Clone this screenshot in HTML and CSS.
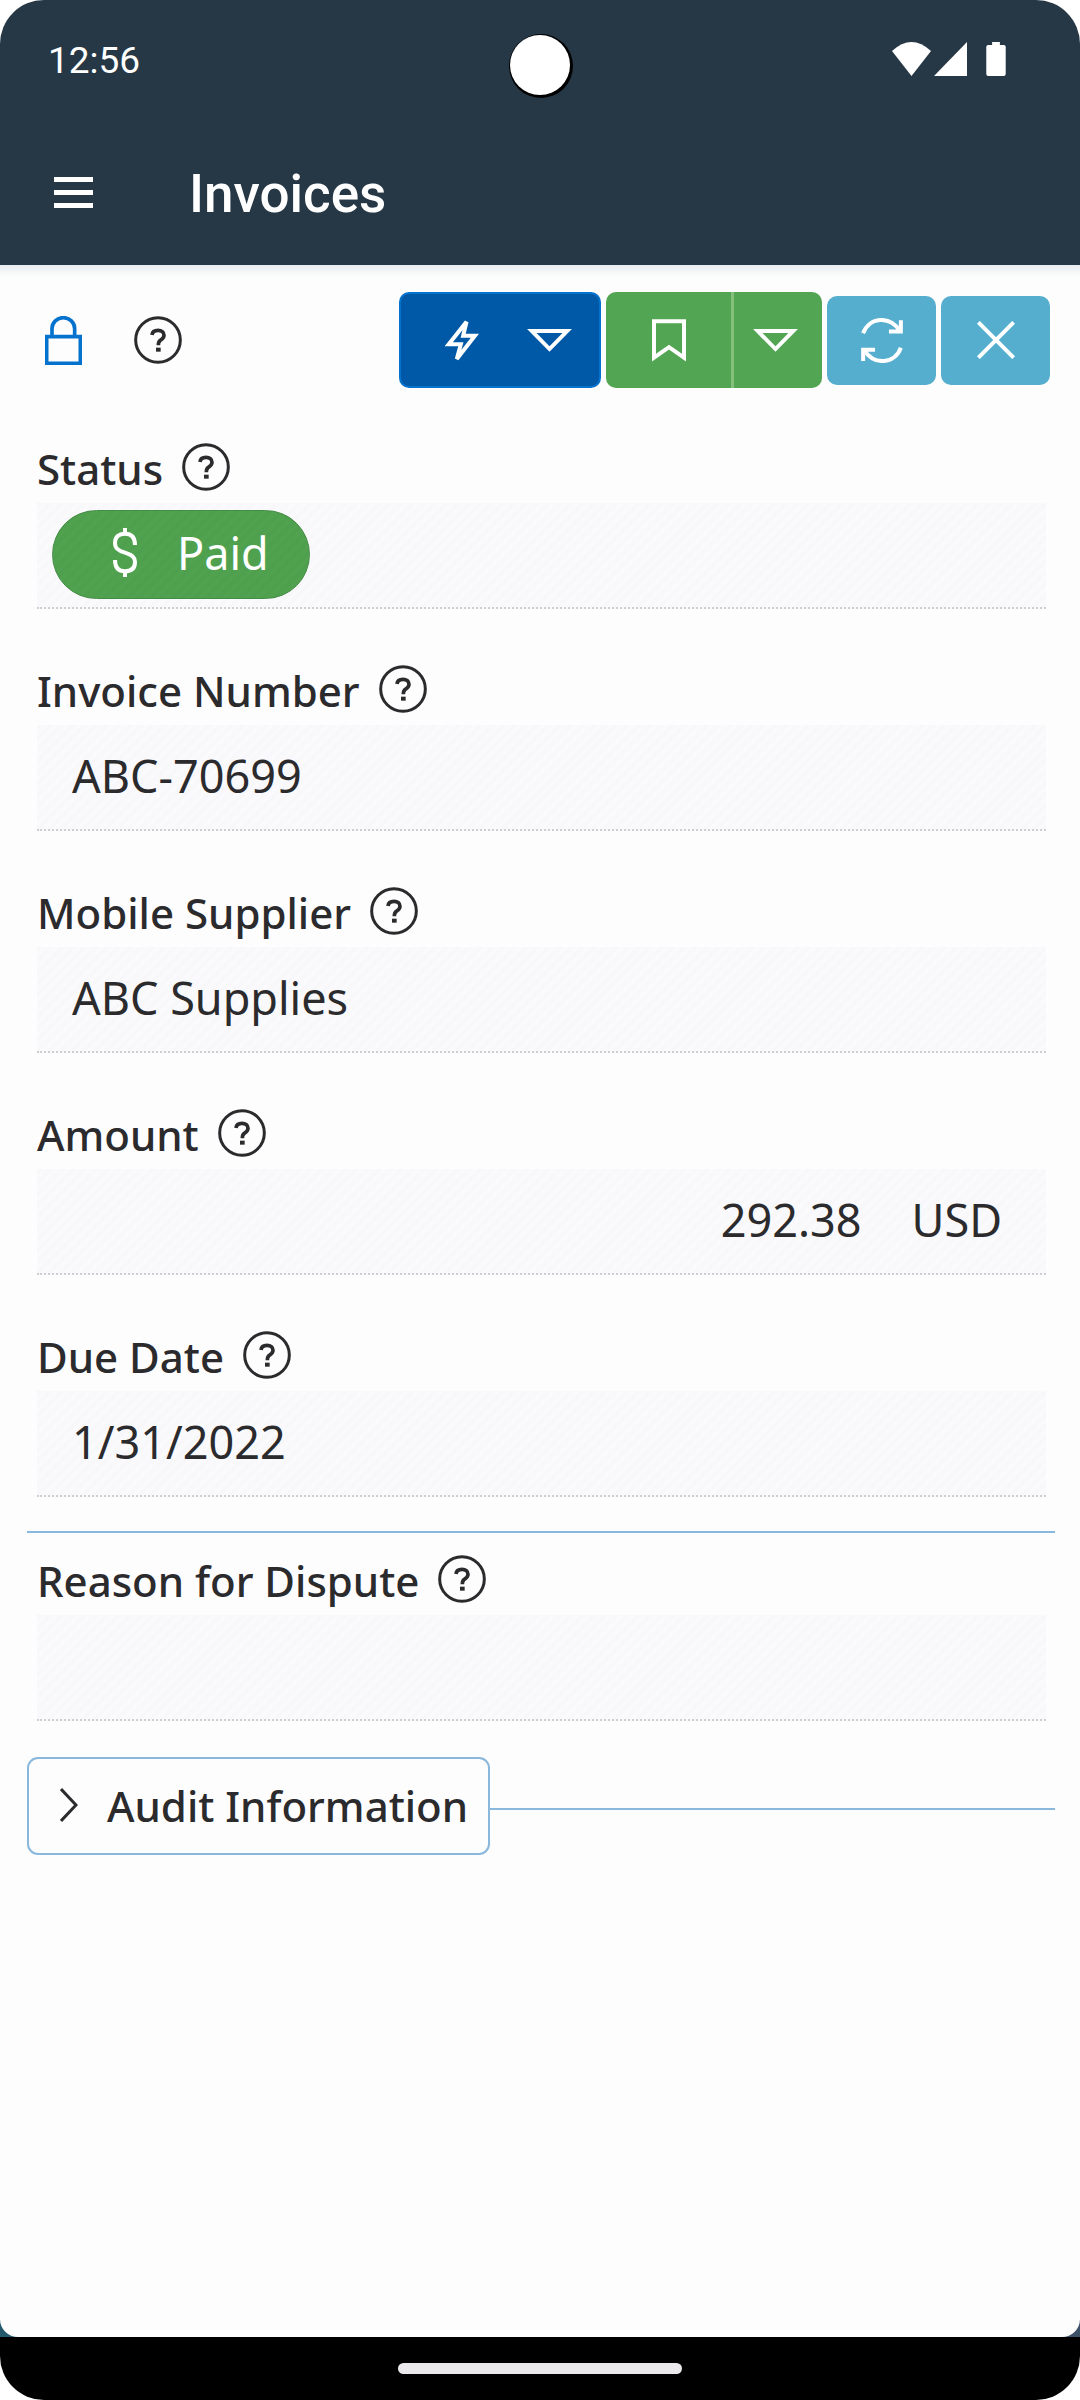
FILE: index.html
```html
<!DOCTYPE html>
<html lang="en">
<head>
  <meta charset="UTF-8">
  <meta name="viewport" content="width=device-width, initial-scale=1">
  <title>Invoices</title>
  <link rel="stylesheet" href="styles.css">
</head>
<body>
  <!-- shared icons -->
  <svg class="sprite" aria-hidden="true">
    <symbol id="icon-help" viewBox="0 0 144 144">
      <circle cx="72" cy="72" r="67" stroke-width="9"/>
      <path d="M54 57C55 47 62 43 72 43C83 43 90 49 90 58C90 67 84 70 79 73C74 76 73 79 73 88" stroke-width="11"/>
      <path d="M66 101H80" stroke-width="12"/>
    </symbol>
    <symbol id="icon-caret" viewBox="0 0 136 70">
      <path d="M14 6H122L68 61Z" stroke-width="12"/>
    </symbol>
  </svg>

  <div class="phone">
    <header class="header">
      <div class="status-bar">
        <span class="clock">12:56</span>
        <span class="camera"></span>
        <div class="indicators">
          <svg class="wifi" viewBox="0 0 39 34"><path d="M0 9Q19.500 -9 39 9L19.500 34Z"/></svg>
          <svg class="signal" viewBox="0 0 33 34"><path d="M33 0V34H0Z"/></svg>
          <svg class="battery" viewBox="0 0 20 35"><path d="M6 0H14V3H18Q20 3 20 5V33Q20 35 18 35H2Q0 35 0 33V5Q0 3 2 3H6Z"/></svg>
        </div>
      </div>
      <div class="app-bar">
        <button class="menu" type="button" aria-label="Menu"><span></span><span></span><span></span></button>
        <h1>Invoices</h1>
      </div>
    </header>

    <div class="backdrop">
      <main class="sheet">
        <div class="toolbar">
          <svg class="lock" viewBox="0 0 111 147">
            <path d="M5 62H106V142H5Z"/>
            <path d="M21 62V38A34 33 0 0 1 89 38V62"/>
          </svg>
          <button class="help" type="button" aria-label="Help"><svg><use href="#icon-help"/></svg></button>

          <div class="actions">
            <button class="btn btn-action" type="button" aria-label="Actions">
              <svg class="bolt" viewBox="0 0 104 158"><path d="M67 23L14 90H50L38 134L92 65H57Z"/></svg>
              <svg class="caret"><use href="#icon-caret"/></svg>
            </button>
            <div class="split">
              <button class="btn btn-save" type="button" aria-label="Save">
                <svg class="bookmark" viewBox="0 0 103 128"><path d="M6 6H97V116L51.500 84L6 116Z"/></svg>
              </button>
              <button class="btn btn-save-more" type="button" aria-label="More save options">
                <svg class="caret"><use href="#icon-caret"/></svg>
              </button>
            </div>
            <button class="btn btn-light" type="button" aria-label="Refresh">
              <svg class="refresh" viewBox="0 0 126 136">
                <path d="M6 46C24 -3 86 -9 117 39M120 7V41H84"/>
                <path d="M120 90C102 139 40 145 9 97M6 130V96H42"/>
              </svg>
            </button>
            <button class="btn btn-light" type="button" aria-label="Close">
              <svg class="close" viewBox="0 0 114 114"><path d="M4 4L110 110M110 4L4 110"/></svg>
            </button>
          </div>
        </div>

        <form class="fields">
          <div class="field">
            <div class="field-label">
              <span>Status</span>
              <button class="help" type="button" aria-label="Help for Status"><svg><use href="#icon-help"/></svg></button>
            </div>
            <div class="box box-status">
              <span class="pill">
                <svg class="dollar" viewBox="0 0 72 147">
                  <path d="M66 51C66 27 56 17 36 17C17 17 6 27 6 45C6 60 14 67 36 74C58 81 66 88 66 102C66 121 55 130 36 130C16 130 6 120 6 96"/>
                  <path d="M36 0V17M36 130V147"/>
                </svg>
                Paid
              </span>
            </div>
          </div>

          <div class="field">
            <div class="field-label">
              <label for="number">Invoice Number</label>
              <button class="help" type="button" aria-label="Help for Invoice Number"><svg><use href="#icon-help"/></svg></button>
            </div>
            <input class="box" id="number" type="text" value="ABC-70699" readonly>
          </div>

          <div class="field">
            <div class="field-label">
              <label for="supplier">Mobile Supplier</label>
              <button class="help" type="button" aria-label="Help for Mobile Supplier"><svg><use href="#icon-help"/></svg></button>
            </div>
            <input class="box" id="supplier" type="text" value="ABC Supplies" readonly>
          </div>

          <div class="field">
            <div class="field-label">
              <label for="amount">Amount</label>
              <button class="help" type="button" aria-label="Help for Amount"><svg><use href="#icon-help"/></svg></button>
            </div>
            <div class="box box-amount">
              <input id="amount" type="text" value="292.38" readonly>
              <span>USD</span>
            </div>
          </div>

          <div class="field">
            <div class="field-label">
              <label for="due">Due Date</label>
              <button class="help" type="button" aria-label="Help for Due Date"><svg><use href="#icon-help"/></svg></button>
            </div>
            <input class="box" id="due" type="text" value="1/31/2022" readonly>
          </div>

          <hr class="divider">

          <div class="field">
            <div class="field-label">
              <label for="reason">Reason for Dispute</label>
              <button class="help" type="button" aria-label="Help for Reason for Dispute"><svg><use href="#icon-help"/></svg></button>
            </div>
            <input class="box" id="reason" type="text" value="" readonly>
          </div>
        </form>

        <div class="audit">
          <button class="audit-toggle" type="button" aria-expanded="false">
            <svg class="chevron" viewBox="0 0 18 34"><path d="M1 1L16 17L1 33"/></svg>
            Audit Information
          </button>
        </div>
      </main>
    </div>

    <footer class="nav-bar"><span class="handle"></span></footer>
  </div>
</body>
</html>
```
FILE: styles.css
```css
:root {
  --header: #263746;
  --text: #2b2a2d;
  --blue: #0572ce;
  --blue-dark: #0059a6;
  --green: #52a552;
  --light-blue: #55aecd;
  --line: #8ab8dd;
}

* {
  box-sizing: border-box;
}

body {
  margin: 0;
  background: #fff;
  color: var(--text);
  font-family: "Noto Sans", sans-serif;
}

button,
input {
  margin: 0;
  padding: 0;
  border: none;
  background: none;
  color: inherit;
  font: inherit;
}

svg {
  display: block;
  fill: none;
  stroke: currentColor;
}

.sprite {
  position: absolute;
  width: 0;
  height: 0;
}

.phone {
  display: flex;
  flex-direction: column;
  min-height: 100vh;
  border-radius: 44px;
  overflow: hidden;
}

/* Header */
.header {
  background: var(--header);
  color: #fff;
  font-family: Roboto, sans-serif;
}

.status-bar {
  display: grid;
  grid-template-columns: 1fr auto 1fr;
  align-items: center;
  height: 120px;
  padding: 10px 74px 0 48px;
}

.clock {
  font-size: 37px;
  line-height: 44px;
  padding-bottom: 8px;
}

.camera {
  width: 60px;
  height: 60px;
  margin-left: 26px;
  border-radius: 50%;
  background: #fff;
  box-shadow: 1px 1px 0 2px #000;
}

.indicators {
  display: flex;
  justify-content: flex-end;
  gap: 3px;
  padding-bottom: 12px;
}

.indicators svg {
  height: 34px;
  fill: #fff;
  stroke: none;
}

.wifi {
  width: 39px;
}

.signal {
  width: 33px;
}

.battery {
  width: 20px;
  margin-left: 16px;
}

.app-bar {
  display: flex;
  align-items: center;
  gap: 96px;
  height: 145px;
  padding: 0 54px;
}

.menu {
  display: flex;
  flex-direction: column;
  gap: 8px;
  width: 39px;
}

.menu span {
  height: 5px;
  background: #fff;
}

h1 {
  margin: 0;
  padding-top: 2px;
  font-size: 53px;
  font-weight: 500;
  line-height: 64px;
}

/* Sheet */
.backdrop {
  display: flex;
  flex: 1;
  background: linear-gradient(to right, #24596b 50%, #3c5068 50%);
}

.sheet {
  flex: 1;
  border-radius: 0 0 18px 18px;
  background: linear-gradient(#e9edf1, #fdfdfd 12px);
}

.toolbar {
  display: flex;
  align-items: center;
  padding: 27px 30px 55px 45px;
}

.lock {
  width: 37px;
  height: 49px;
  margin-right: 52px;
  color: var(--blue);
  stroke-width: 11;
}

.help svg {
  width: 48px;
  height: 48px;
}

.actions {
  display: flex;
  align-items: center;
  gap: 5px;
  margin-left: auto;
  color: #fff;
}

.actions svg {
  stroke-width: 12;
}

.btn {
  display: flex;
  align-items: center;
  justify-content: center;
  height: 96px;
  border-radius: 10px;
}

.btn-action {
  gap: 48px;
  width: 202px;
  padding-left: 16px;
  border: 2px solid var(--blue);
  background: var(--blue-dark);
}

.split {
  display: flex;
  border-radius: 10px;
  background: var(--green);
}

.btn-save {
  width: 125px;
}

.btn-save-more {
  width: 91px;
  padding-right: 6px;
  border-left: 3px solid #85c17c;
  border-radius: 0;
}

.btn-light {
  width: 109px;
  height: 89px;
  background: var(--light-blue);
}

.bolt {
  width: 35px;
  height: 53px;
}

.caret {
  width: 45px;
  height: 23px;
}

.bookmark {
  width: 34px;
  height: 43px;
}

.refresh {
  width: 42px;
  height: 45px;
}

.close {
  width: 38px;
  height: 38px;
}

/* Fields */
.fields {
  padding: 0 34px 0 37px;
}

.field + .field {
  margin-top: 56px;
}

.field-label {
  display: flex;
  align-items: center;
  gap: 19px;
  margin-bottom: 12px;
  font-size: 42px;
  font-weight: 500;
  line-height: 44px;
}

.field-label > :first-child {
  padding-top: 4px;
}

.box {
  display: flex;
  align-items: center;
  width: 100%;
  height: 106px;
  padding: 0 44px 4px 35px;
  border-bottom: 2px dotted #cfced2;
  background: repeating-linear-gradient(135deg, #f8f7f9 0 4px, #faf9fb 4px 8px);
  font-size: 45px;
}

.box-status {
  padding: 0 15px 2px;
}

.pill {
  display: flex;
  align-items: center;
  gap: 40px;
  height: 89px;
  padding: 0 40px 4px 60px;
  border: 1px solid #458c47;
  border-radius: 45px;
  background: repeating-linear-gradient(135deg, #4ea04e 0 4px, #50a24f 4px 8px);
  color: #fff;
}

.dollar {
  width: 24px;
  height: 49px;
  stroke-width: 12;
}

.box-amount {
  gap: 50px;
}

.box-amount input {
  flex: 1;
  min-width: 0;
  text-align: right;
}

.divider {
  height: 2px;
  margin: 34px -9px 22px -10px;
  border: none;
  background: var(--line);
}

/* Audit section */
.audit {
  display: flex;
  align-items: center;
  margin: 36px 25px 0 27px;
}

.audit::after {
  content: "";
  flex: 1;
  height: 2px;
  margin-top: 6px;
  background: var(--line);
}

.audit-toggle {
  display: flex;
  align-items: center;
  gap: 29px;
  height: 98px;
  padding: 0 20px 2px 31px;
  border: 2px solid var(--line);
  border-radius: 11px;
  font-size: 42px;
  font-weight: 500;
}

.chevron {
  width: 18px;
  height: 34px;
  stroke-width: 3;
}

/* System navigation */
.nav-bar {
  display: flex;
  justify-content: center;
  padding: 26px;
  background: #000;
}

.handle {
  width: 284px;
  height: 11px;
  border-radius: 6px;
  background: #ebe9eb;
}
```
